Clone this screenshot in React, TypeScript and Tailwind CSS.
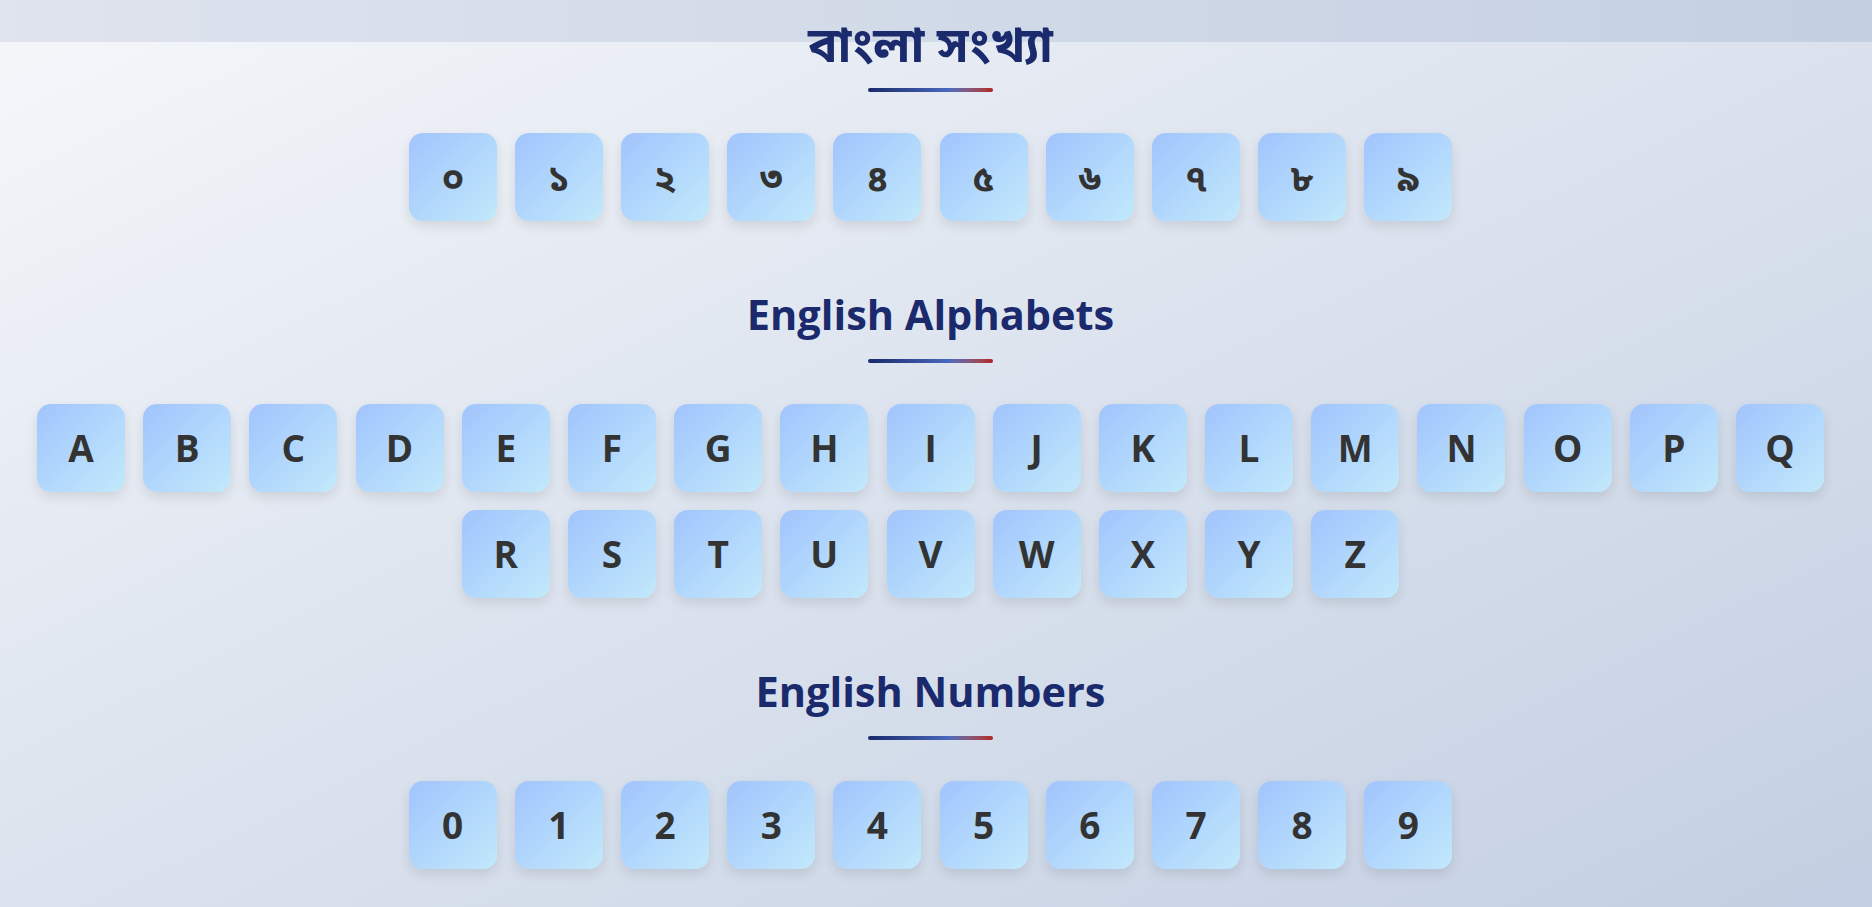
const banglaDigits = ['০', '১', '২', '৩', '৪', '৫', '৬', '৭', '৮', '৯'];
const alphabets = 'ABCDEFGHIJKLMNOPQRSTUVWXYZ'.split('');
const numbers = ['0', '1', '2', '3', '4', '5', '6', '7', '8', '9'];

function Section({ title, items, first }: { title: string; items: string[]; first?: boolean }) {
  return (
    <section className={first ? 'flex flex-col items-center' : 'flex flex-col items-center mt-[69px]'}>
      <h2
        className={
          first
            ? 'text-[49px] leading-[48px] font-bold text-[#1a2a6c] text-center'
            : 'text-[41.5px] leading-[48px] font-bold text-[#1a2a6c] text-center'
        }
      >
        {title}
      </h2>
      <div className="mt-[21px] w-[125px] h-1 rounded-full bg-gradient-to-r from-[#1a2a6c] via-[#4a69bd] via-65% to-[#b21f1f]" />
      <div className="mt-[41px] flex flex-wrap justify-center gap-x-[18.2px] gap-y-[18px]">
        {items.map((ch) => (
          <div
            key={ch}
            className="w-[88px] h-[88px] rounded-[14px] flex items-center justify-center bg-gradient-to-br from-[#a1c4fd] to-[#c2e9fb] shadow-[0_5px_12px_rgba(0,0,0,0.1)] text-[37px] font-bold text-[#333333]"
          >
            {ch}
          </div>
        ))}
      </div>
    </section>
  );
}

export default function App() {
  return (
    <div className="relative min-h-screen bg-gradient-to-br from-[#f5f7fa] to-[#c3cfe2] font-['Open_Sans','Noto_Sans','Noto_Sans_Bengali',sans-serif]">
      {/* Header band */}
      <div className="absolute top-0 inset-x-0 h-[42px] bg-gradient-to-r from-[#dfe4ee] to-[#c4d0e2]" />

      <main className="relative pt-[19px] pr-[11px] pb-10">
        <Section title="বাংলা সংখ্যা" items={banglaDigits} first />
        <Section title="English Alphabets" items={alphabets} />
        <Section title="English Numbers" items={numbers} />
      </main>
    </div>
  );
}
